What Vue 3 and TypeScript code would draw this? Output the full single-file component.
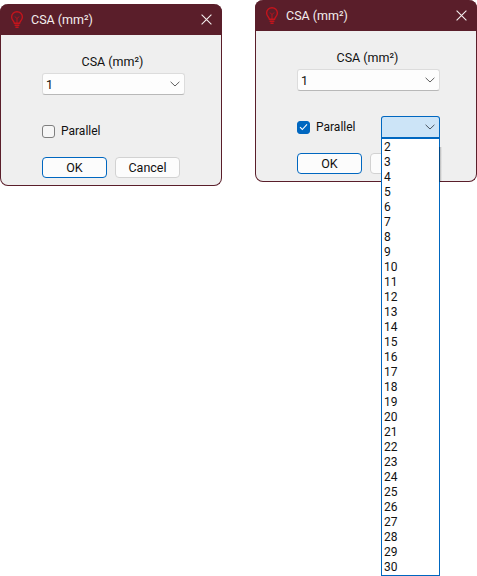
<template>
  <div class="desktop">
    <div v-for="win in windows" :key="win.id" class="window" :class="win.id">
      <div class="title-bar">
        <svg class="app-icon" width="16" height="18" viewBox="0 0 16 18" fill="none" stroke="#c4141c" stroke-width="1.4">
          <path d="M5.4 12.2C5.2 10.2 2.6 9 2.6 5.9a5.4 5.2 0 0 1 10.8 0C13.4 9 10.8 10.2 10.6 12.2Z" />
          <path d="M6 5.5l2 2.2 2-2.2M8 7.7v4.3" stroke-width="0.9" />
          <path d="M5.6 14.2h4.8M6.4 16.2h3.2" />
        </svg>
        <span class="title">CSA (mm²)</span>
        <svg class="close" width="11" height="11" viewBox="0 0 11 11" stroke="#f4eeee" stroke-width="1.1">
          <path d="M.6.6l9.8 9.8M10.4.6L.6 10.4" />
        </svg>
      </div>

      <div class="body">
        <div class="field-label">CSA (mm²)</div>
        <div class="combo">
          <span>1</span>
          <svg class="chevron" width="10" height="6" viewBox="0 0 10 6" fill="none" stroke="#5f5f5f">
            <path d="M.6.8L5 5l4.4-4.2" />
          </svg>
        </div>

        <div class="parallel-row">
          <span class="checkbox" :class="{ checked: win.parallel }">
            <svg v-if="win.parallel" width="9" height="8" viewBox="0 0 9 8" fill="none" stroke="#fff" stroke-width="1.1">
              <path d="M1 4.2l2.3 2.3L8 1.4" />
            </svg>
          </span>
          <span class="parallel-label">Parallel</span>

          <div v-if="win.parallel" class="count-combo">
            <svg class="chevron" width="10" height="6" viewBox="0 0 10 6" fill="none" stroke="#4a5560">
              <path d="M.6.8L5 5l4.4-4.2" />
            </svg>
            <ul class="count-list">
              <li v-for="n in counts" :key="n">{{ n }}</li>
            </ul>
          </div>
        </div>

        <div class="actions">
          <button class="btn primary">OK</button>
          <!-- the open dropdown covers this label in the second dialog -->
          <button class="btn">{{ win.parallel ? '' : 'Cancel' }}</button>
        </div>
      </div>
    </div>
  </div>
</template>

<script setup lang="ts">
const windows = [
  { id: 'first', parallel: false },
  { id: 'second', parallel: true },
];

// parallel counts offered by the dropdown
const counts: number[] = Array.from({ length: 29 }, (_, i) => i + 2);
</script>

<style>
html, body { background: #fff; overflow: hidden; }
</style>

<style scoped>
.desktop {
  position: relative; width: 477px; height: 576px; overflow: hidden;
  font-family: Roboto, "Open Sans", "Liberation Sans", sans-serif;
  font-size: 12.5px; color: #111;
}
.window {
  position: absolute; width: 222px; height: 182px; box-sizing: border-box;
  display: flex; flex-direction: column;
  background: #efefef; border: 1px solid #5a1e2a; border-top: none;
  border-radius: 8px;
}
.first { left: 0; top: 4px; }
.second { left: 255px; top: 0; }
.title-bar {
  height: 31px; flex: none; margin: 0 -1px; padding: 0 10px 0 9px;
  display: flex; align-items: center;
  background: #5a1e2a; color: #f4eeee; border-radius: 8px 8px 0 0;
}
.app-icon { flex: none; margin-right: 6px; }
.title { flex: 1; }
.body { flex: 1; padding: 18px 36px 0 41px; display: flex; flex-direction: column; }
.field-label { text-align: center; height: 18px; line-height: 18px; margin-bottom: 2px; padding-right: 2px; }
.combo {
  height: 22px; box-sizing: border-box; padding: 0 4px 0 3px;
  display: flex; align-items: center; justify-content: space-between;
  background: #fdfdfd; border: 1px solid #dcdcdc; border-bottom-color: #b8b8b8;
  border-radius: 3px;
}
.parallel-row {
  position: relative; height: 14px; margin-top: 29px;
  display: flex; align-items: center;
}
.checkbox {
  width: 13px; height: 13px; box-sizing: border-box; flex: none;
  display: flex; align-items: center; justify-content: center;
  background: #f6f6f6; border: 1px solid #7f7f7f; border-radius: 3px;
}
.checkbox.checked { background: #0067c0; border-color: #0067c0; }
.parallel-label { margin-left: 6px; font-size: 12px; }
.count-combo {
  position: absolute; left: 84px; top: -4px; width: 59px; height: 23px;
  box-sizing: border-box; z-index: 2;
  display: flex; align-items: center; justify-content: flex-end; padding-right: 4px;
  background: #cce4f7; border: 1px solid #0067c0; border-bottom-width: 2px; border-radius: 3px 3px 0 0;
}
.count-list {
  position: absolute; left: -1px; top: 22px; width: 59px; margin: 0; padding: 1px 0 0;
  box-sizing: border-box; list-style: none;
  background: #fff; border: 1px solid #0067c0; border-top: none;
}
/* the menu's shadow only shows where it falls on the dialog */
.count-list::after {
  content: ""; position: absolute; left: 100%; top: 8px; width: 3px; height: 35px;
  background: linear-gradient(to right, rgba(0, 0, 0, 0.35), rgba(0, 0, 0, 0));
}
.count-list li { height: 15px; line-height: 15px; padding-left: 2px; font-size: 12px; }
.actions { margin-top: 19px; display: flex; gap: 8px; }
.btn {
  width: 65px; height: 21px; box-sizing: border-box; padding: 0;
  font: inherit; color: #111;
  background: #fcfcfc; border: 1px solid #d2d2d2; border-radius: 4px;
}
.btn.primary { border-color: #0067c0; }
</style>
